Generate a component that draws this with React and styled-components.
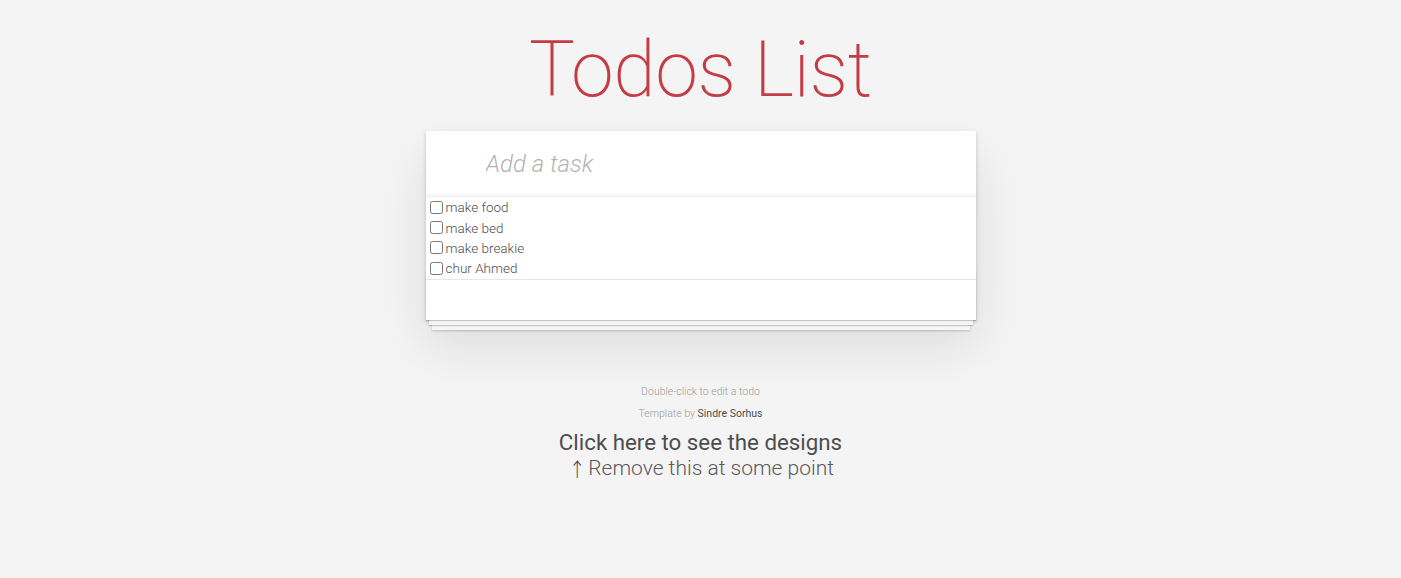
import React from "react";
import styled, { createGlobalStyle } from "styled-components";

const Global = createGlobalStyle`
  html, body { margin: 0; padding: 0; }
  body {
    background: #f4f4f4;
    font-family: "Roboto", "Helvetica Neue", "Liberation Sans", sans-serif;
    font-weight: 300;
    font-size: 14px;
    line-height: 1.4em;
    color: #4d4d4d;
    min-height: 578px;
  }
`;

const Page = styled.div`
  width: 550px;
  margin: 0 auto;
  padding-top: 22px;
`;

const Title = styled.h1`
  margin: 0;
  height: 109px;
  font-size: 77px;
  line-height: 96px;
  font-weight: 200;
  letter-spacing: -0.4px;
  color: #c43c46;
  text-align: center;
`;

const Card = styled.section`
  background: #fff;
  position: relative;
  box-shadow: 0 2px 4px rgba(0, 0, 0, 0.2), 0 25px 50px rgba(0, 0, 0, 0.1);
`;

const Header = styled.header`
  height: 65px;
  display: flex;
  align-items: center;
  box-shadow: inset 0 -2px 1px rgba(0, 0, 0, 0.03);
`;

const NewTodo = styled.input`
  width: 100%;
  border: none;
  outline: none;
  background: transparent;
  padding: 16px 16px 16px 60px;
  font-family: inherit;
  font-size: 24px;
  font-weight: 300;
  color: #4d4d4d;
  &::placeholder {
    font-style: italic;
    color: #b3b3b3;
    font-weight: 300;
  }
`;

const List = styled.ul`
  list-style: none;
  margin: 0;
  padding: 0 0 1px 0;
  border-top: 1px solid #f0f0f0;
`;

const Item = styled.li`
  display: flex;
  align-items: center;
  height: 20.3px;
  font-size: 13.5px;
  color: #4d4d4d;
`;

const Check = styled.input`
  margin: 0 3px 0 4px;
  width: 13px;
  height: 13px;
`;

const Label = styled.span`
  padding-top: 2px;
`;

const Footer = styled.footer`
  position: relative;
  height: 40px;
  border-top: 1px solid #e6e6e6;
  &::before {
    content: "";
    position: absolute;
    left: 0;
    right: 0;
    bottom: 0;
    height: 50px;
    overflow: hidden;
    box-shadow: 0 1px 1px rgba(0, 0, 0, 0.2), 0 8px 0 -3px #f6f6f6,
      0 9px 1px -3px rgba(0, 0, 0, 0.2), 0 16px 0 -6px #f6f6f6,
      0 17px 2px -6px rgba(0, 0, 0, 0.2);
  }
`;

const Info = styled.footer`
  margin-top: 67px;
  text-align: center;
  color: #9a9a9a;
  font-size: 10.5px;
  text-shadow: 0 1px 0 rgba(255, 255, 255, 0.5);
`;

const InfoLine = styled.p`
  margin: 0 0 11px;
  line-height: 1;
`;

const Author = styled.a`
  color: #4d4d4d;
  font-weight: 400;
  text-decoration: none;
`;

const Designs = styled.div`
  margin-top: 10px;
  text-align: center;
  font-size: 22.3px;
  line-height: 25px;
  color: #4d4d4d;
`;

const DesignLink = styled.a`
  display: block;
  color: #4d4d4d;
  font-weight: 400;
  text-decoration: none;
`;

const Note = styled.div`
  font-weight: 300;
  font-size: 21px;
  color: #5a5a5a;
`;

const Arrow = styled.span`
  font-family: "DejaVu Sans", sans-serif;
  font-weight: 200;
  font-size: 24px;
  display: inline-block;
  transform: translateY(3px) scaleX(0.8);
  margin-right: -4px;
  color: #4d4d4d;
`;

const todos = ["make food", "make bed", "make breakie", "chur Ahmed"];

export default function App() {
  return (
    <>
      <Global />
      <Page>
        <Title>Todos List</Title>
        <Card>
          <Header>
            <NewTodo placeholder="Add a task" />
          </Header>
          <List>
            {todos.map((t) => (
              <Item key={t}>
                <Check type="checkbox" />
                <Label>{t}</Label>
              </Item>
            ))}
          </List>
          <Footer />
        </Card>
        <Info>
          <InfoLine>Double-click to edit a todo</InfoLine>
          <InfoLine>
            Template by <Author href="#">Sindre Sorhus</Author>
          </InfoLine>
        </Info>
        <Designs>
          <DesignLink href="#">Click here to see the designs</DesignLink>
          <Note>
            <Arrow>↑</Arrow> Remove this at some point
          </Note>
        </Designs>
      </Page>
    </>
  );
}
